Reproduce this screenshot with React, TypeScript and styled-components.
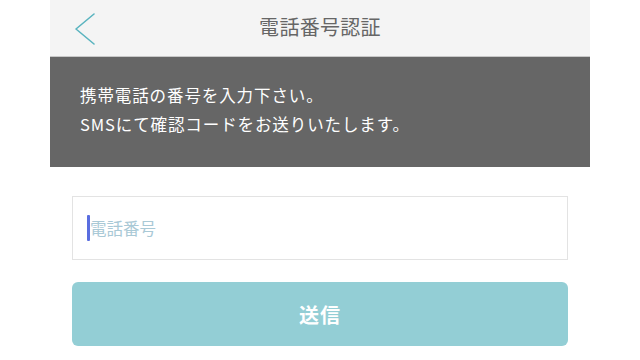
import styled, { createGlobalStyle } from 'styled-components'

const GlobalStyle = createGlobalStyle`
  html, body {
    margin: 0;
    padding: 0;
    background: #ffffff;
  }

  body {
    font-family: "Noto Sans CJK JP", "Noto Sans", sans-serif;
  }

  * {
    box-sizing: border-box;
  }
`

function BackIcon() {
  return (
    <svg width="20" height="32" viewBox="0 0 20 32" fill="none">
      <polyline
        points="19,1 1,16 19,31"
        stroke="#5ab4bf"
        strokeWidth="1.6"
        strokeLinecap="round"
        strokeLinejoin="round"
      />
    </svg>
  )
}

export default function App() {
  return (
    <>
      <GlobalStyle />
      <Page>
        <Header>
          <BackButton type="button" aria-label="戻る">
            <BackIcon />
          </BackButton>
          <Title>電話番号認証</Title>
          <span />
        </Header>
        <Notice>
          <p>携帯電話の番号を入力下さい。</p>
          <p>SMSにて確認コードをお送りいたします。</p>
        </Notice>
        <Form onSubmit={(e) => e.preventDefault()}>
          <Field>
            <Caret />
            <PhoneInput type="tel" placeholder="電話番号" />
          </Field>
          <SubmitButton type="submit">送信</SubmitButton>
        </Form>
      </Page>
    </>
  )
}

const Page = styled.div`
  display: flex;
  flex-direction: column;
  margin: 0 auto;
  width: 540px;
`

const Header = styled.header`
  align-items: center;
  background-color: #f4f4f4;
  border-bottom: solid 1px #c8c8c8;
  display: grid;
  grid-template-columns: 1fr auto 1fr;
  height: 57px;
`

const BackButton = styled.button`
  align-items: center;
  background: none;
  border: none;
  cursor: pointer;
  display: flex;
  justify-self: start;
  margin-left: 25px;
  margin-top: 1px;
  padding: 0;
`

const Title = styled.h1`
  color: #666666;
  font-size: 20px;
  font-weight: 400;
  letter-spacing: 0.3px;
  margin: 0 0 4px;
`

const Notice = styled.div`
  background-color: #666666;
  color: #ffffff;
  display: flex;
  flex-direction: column;
  height: 110px;
  padding: 24px 30px 0;

  & > p {
    font-size: 16.5px;
    letter-spacing: 0.9px;
    line-height: 29px;
    margin: 0;
  }
`

const Form = styled.form`
  display: flex;
  flex-direction: column;
  gap: 22px;
  padding: 29px 22px 0;
`

const Field = styled.label`
  align-items: center;
  background-color: #ffffff;
  border: solid 1px #e3e3e3;
  display: flex;
  height: 64px;
  padding-left: 14px;
`

const Caret = styled.span`
  background-color: #5a6ee0;
  border-radius: 1px;
  flex-shrink: 0;
  height: 26px;
  width: 3px;
`

const PhoneInput = styled.input`
  background: transparent;
  border: none;
  color: #333333;
  flex: 1;
  font-family: inherit;
  font-size: 16.5px;
  height: 100%;
  outline: none;
  padding: 0;

  &::placeholder {
    color: #a9c9d6;
  }
`

const SubmitButton = styled.button`
  background-color: #93ced5;
  border: none;
  border-radius: 6px;
  color: #ffffff;
  cursor: pointer;
  font-family: inherit;
  font-size: 20px;
  font-weight: 700;
  height: 64px;
  letter-spacing: 1px;
  width: 100%;
`
